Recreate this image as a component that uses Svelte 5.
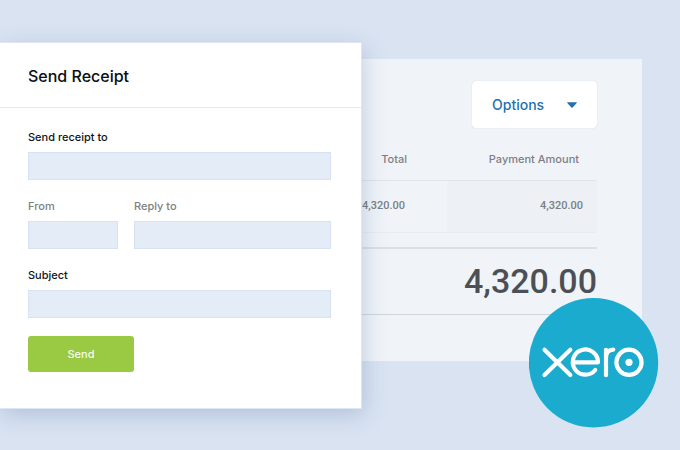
<script>
  let to = $state('');
  let from = $state('');
  let replyTo = $state('');
  let subject = $state('');

  const payments = [{ total: '4,320.00', amount: '4,320.00' }];
</script>

<main class="page">
  <section class="dialog" aria-labelledby="dialog-title">
    <header class="dialog-head">
      <h1 id="dialog-title">Send Receipt</h1>
    </header>
    <form class="form" onsubmit={(event) => event.preventDefault()}>
      <div class="field">
        <label for="to">Send receipt to</label>
        <input id="to" type="text" bind:value={to} />
      </div>
      <div class="row">
        <div class="field short muted">
          <label for="from">From</label>
          <input id="from" type="text" bind:value={from} />
        </div>
        <div class="field muted">
          <label for="reply-to">Reply to</label>
          <input id="reply-to" type="text" bind:value={replyTo} />
        </div>
      </div>
      <div class="field">
        <label for="subject">Subject</label>
        <input id="subject" type="text" bind:value={subject} />
      </div>
      <button class="send" type="submit">Send</button>
    </form>
  </section>

  <section class="invoice">
    <div class="toolbar">
      <button class="options" type="button" aria-haspopup="menu">
        Options
        <svg width="10" height="6" viewBox="0 0 10 6" aria-hidden="true">
          <path d="M0.6 0.3h8.8q.8 0 .3.6L5.6 5.4q-.6.6-1.2 0L.3.9Q-.2.3.6.3z" fill="currentColor" />
        </svg>
      </button>
    </div>
    <table>
      <thead>
        <tr><th class="total">Total</th><th class="amount">Payment Amount</th></tr>
      </thead>
      <tbody>
        {#each payments as payment}
          <tr><td class="total">{payment.total}</td><td class="amount">{payment.amount}</td></tr>
        {/each}
      </tbody>
    </table>
    <p class="sum">4,320.00</p>

    <svg class="logo" viewBox="0 0 130 130" role="img" aria-label="Xero">
      <circle cx="64.5" cy="64.7" r="64.7" fill="#1aabcf" />
      <g fill="none" stroke="#fff" stroke-width="4.2" stroke-linecap="round" stroke-linejoin="round">
        <path d="M15.5 51.8 41.3 77M41.3 51.8 15.5 77" />
        <path d="M44.5 64.3H69A12.6 12.6 0 1 0 66.2 72" />
        <path d="M77 77.2V51.8M77 60C77 54 79.5 51.6 84.3 51.6" />
        <circle cx="100" cy="64.3" r="12.6" />
      </g>
      <circle cx="100" cy="64.3" r="3.6" fill="#fff" />
    </svg>
  </section>
</main>

<style>
  :global(body) {
    margin: 0;
    background: #d9e3f2;
  }

  .page {
    box-sizing: border-box;
    display: flex;
    align-items: flex-start;
    min-height: 100vh;
    padding: 43px 38px 42px 0;
    font-family: Inter, "Liberation Sans", sans-serif;
    font-size: 11px;
    font-weight: 500;
    line-height: 16px;
  }

  .dialog {
    position: relative;
    z-index: 1;
    flex: 1;
    min-width: 0;
    background: #fff;
    box-shadow: 0 0 0 1px #dde6f2, 2px 6px 22px rgba(70, 100, 150, 0.28);
  }

  .dialog-head {
    padding: 22px 28px 20px;
    border-bottom: 1px solid #e3e9ee;
  }

  h1 {
    margin: 0;
    color: #0b0d10;
    font-size: 16px;
    font-weight: 500;
    line-height: 22px;
  }

  .form {
    display: flex;
    flex-direction: column;
    gap: 18px;
    padding: 21px 30px 36px 28px;
  }

  .row {
    display: flex;
    gap: 16px;
  }

  .field {
    display: flex;
    flex: 1;
    flex-direction: column;
    gap: 7px;
    min-width: 0;
    color: #111317;
  }

  .short {
    flex: 0 0 90px;
  }

  .muted {
    color: #7c7f84;
  }

  input {
    box-sizing: border-box;
    width: 100%;
    height: 28px;
    padding: 0 8px;
    border: 1px solid #d8e2f0;
    border-radius: 0;
    background: #e4ecf8;
    color: #111317;
    font: inherit;
  }

  button {
    border: 0;
    font: inherit;
    cursor: pointer;
  }

  .send {
    align-self: flex-start;
    width: 106px;
    height: 36px;
    border-radius: 3px;
    background: #9aca43;
    color: #f7fbee;
  }

  .invoice {
    position: relative;
    box-sizing: border-box;
    flex: 0 0 281px;
    margin-top: 16px;
    padding: 22px 45px 46px 0;
    background: #f0f4f9;
    color: #7b7f85;
  }

  .toolbar {
    display: flex;
    justify-content: flex-end;
  }

  .options {
    display: flex;
    align-items: center;
    justify-content: space-between;
    width: 125px;
    height: 47px;
    padding: 0 20px;
    border-radius: 4px;
    background: #fff;
    box-shadow: 0 0 1px rgba(60, 80, 110, 0.3);
    color: #2470ad;
    font-size: 14px;
  }

  table {
    width: 100%;
    margin-top: 20px;
    border-collapse: collapse;
    table-layout: fixed;
  }

  th {
    box-sizing: border-box;
    padding: 3px 0 13px;
    font-weight: 500;
    text-align: right;
    white-space: nowrap;
  }

  td {
    padding: 17px 0 18px;
    border-top: 1px solid #e0e5eb;
    border-bottom: 1px solid #e9edf2;
    font-family: Roboto, "Liberation Sans", sans-serif;
    text-align: right;
  }

  th.total {
    padding-right: 40px;
  }

  td.total {
    padding-right: 42px;
  }

  th.amount {
    width: 150px;
    padding-right: 18px;
  }

  td.amount {
    padding-right: 14px;
    background: #edf0f5;
  }

  .sum {
    margin: 14px 0 0;
    padding: 12px 0 13px;
    border-top: 2px solid #dbe0e6;
    border-bottom: 1px solid #cfd5dc;
    color: #4c5055;
    font-family: Roboto, "Liberation Sans", sans-serif;
    font-size: 34px;
    line-height: 40px;
    text-align: right;
  }

  .logo {
    position: absolute;
    right: -17px;
    bottom: -67px;
    width: 130px;
    height: 130px;
  }
</style>
